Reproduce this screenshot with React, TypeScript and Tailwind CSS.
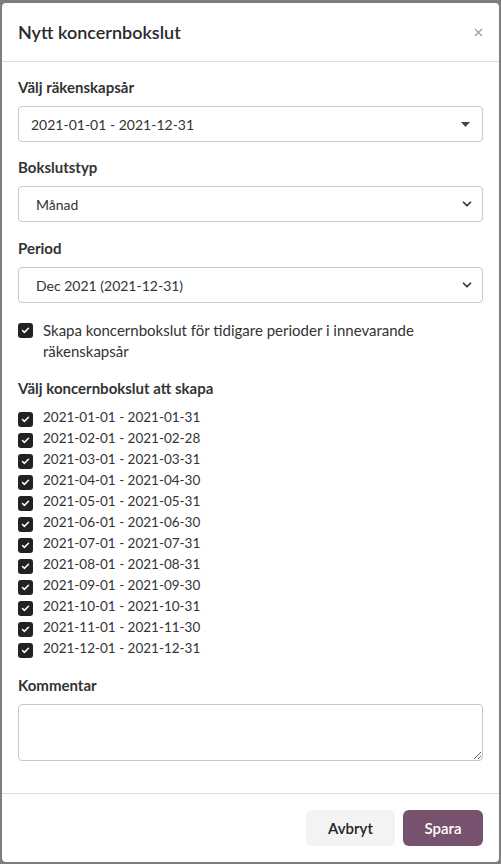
import { Check, ChevronDown, X } from 'lucide-react'

const periods = [
  ['2021-01-01', '2021-01-31'],
  ['2021-02-01', '2021-02-28'],
  ['2021-03-01', '2021-03-31'],
  ['2021-04-01', '2021-04-30'],
  ['2021-05-01', '2021-05-31'],
  ['2021-06-01', '2021-06-30'],
  ['2021-07-01', '2021-07-31'],
  ['2021-08-01', '2021-08-31'],
  ['2021-09-01', '2021-09-30'],
  ['2021-10-01', '2021-10-31'],
  ['2021-11-01', '2021-11-30'],
  ['2021-12-01', '2021-12-31'],
]

export default function App() {
  return (
    <div className="h-[864px] w-[501px] bg-[#7d7d7d] p-[2px] pt-[3px] font-['Lato',sans-serif] text-[#333]">
      <div className="flex h-[859px] flex-col rounded-[4px] bg-white">
        {/* Header */}
        <div className="flex h-[59px] items-center justify-between border-b border-[#dcdcdc] pl-[16px] pr-[14px]">
          <h1 className="text-[18px] font-semibold text-[#2b2b2b]">Nytt koncernbokslut</h1>
          <X size={13} strokeWidth={2} className="text-[#999]" />
        </div>

        {/* Body */}
        <div className="flex-1 px-[16px] pt-[15px]">
          <Label>Välj räkenskapsår</Label>
          <div className="mt-[9px] flex h-[36px] items-center justify-between rounded-[4px] border border-[#c8c8c8] pl-[12px] pr-[12px] text-[14px]">
            <span>2021-01-01 - 2021-12-31</span>
            <svg width="9" height="5" viewBox="0 0 9 5"><path d="M0 0h9L4.5 5z" fill="#444" /></svg>
          </div>

          <div className="mt-[15px]">
            <Label>Bokslutstyp</Label>
            <SelectBox value="Månad" />
          </div>

          <div className="mt-[16px]">
            <Label>Period</Label>
            <SelectBox value="Dec 2021 (2021-12-31)" />
          </div>

          <div className="mt-[17px] flex gap-[10px] text-[15px] leading-[21px]">
            <Box />
            <span>Skapa koncernbokslut för tidigare perioder i innevarande räkenskapsår</span>
          </div>

          <div className="mt-[16px]">
            <Label>Välj koncernbokslut att skapa</Label>
          </div>
          <div className="mt-[9px] flex flex-col">
            {periods.map(([a, b]) => (
              <div key={a} className="flex items-center gap-[10px] text-[13.5px] leading-[21px]">
                <Box />
                <span>{a} - {b}</span>
              </div>
            ))}
          </div>

          <div className="mt-[16px]">
            <Label>Kommentar</Label>
            <textarea className="mt-[9px] block h-[57px] w-full rounded-[4px] border border-[#c8c8c8]" />
          </div>
        </div>

        {/* Footer */}
        <div className="flex h-[69px] items-center justify-end gap-[8px] border-t border-[#dcdcdc] px-[16px]">
          <button className="h-[36px] w-[89px] rounded-[6px] bg-[#f3f3f3] text-[15px] font-semibold text-[#222]">Avbryt</button>
          <button className="h-[36px] w-[80px] rounded-[6px] bg-[#77526f] text-[15px] font-semibold text-white">Spara</button>
        </div>
      </div>
    </div>
  )
}

function Label({ children }: { children: React.ReactNode }) {
  return <div className="text-[15px] font-bold leading-[20px] text-[#333]">{children}</div>
}

function SelectBox({ value }: { value: string }) {
  return (
    <div className="mt-[9px] flex h-[36px] items-center justify-between rounded-[4px] border border-[#c8c8c8] pl-[17px] pr-[8px] text-[14px]">
      <span>{value}</span>
      <ChevronDown size={14} strokeWidth={3} className="text-[#333]" />
    </div>
  )
}

function Box() {
  return (
    <span className="mt-[3px] flex h-[15px] w-[15px] shrink-0 items-center justify-center rounded-[3px] bg-[#222]">
      <Check size={9} strokeWidth={4} className="text-white" />
    </span>
  )
}
